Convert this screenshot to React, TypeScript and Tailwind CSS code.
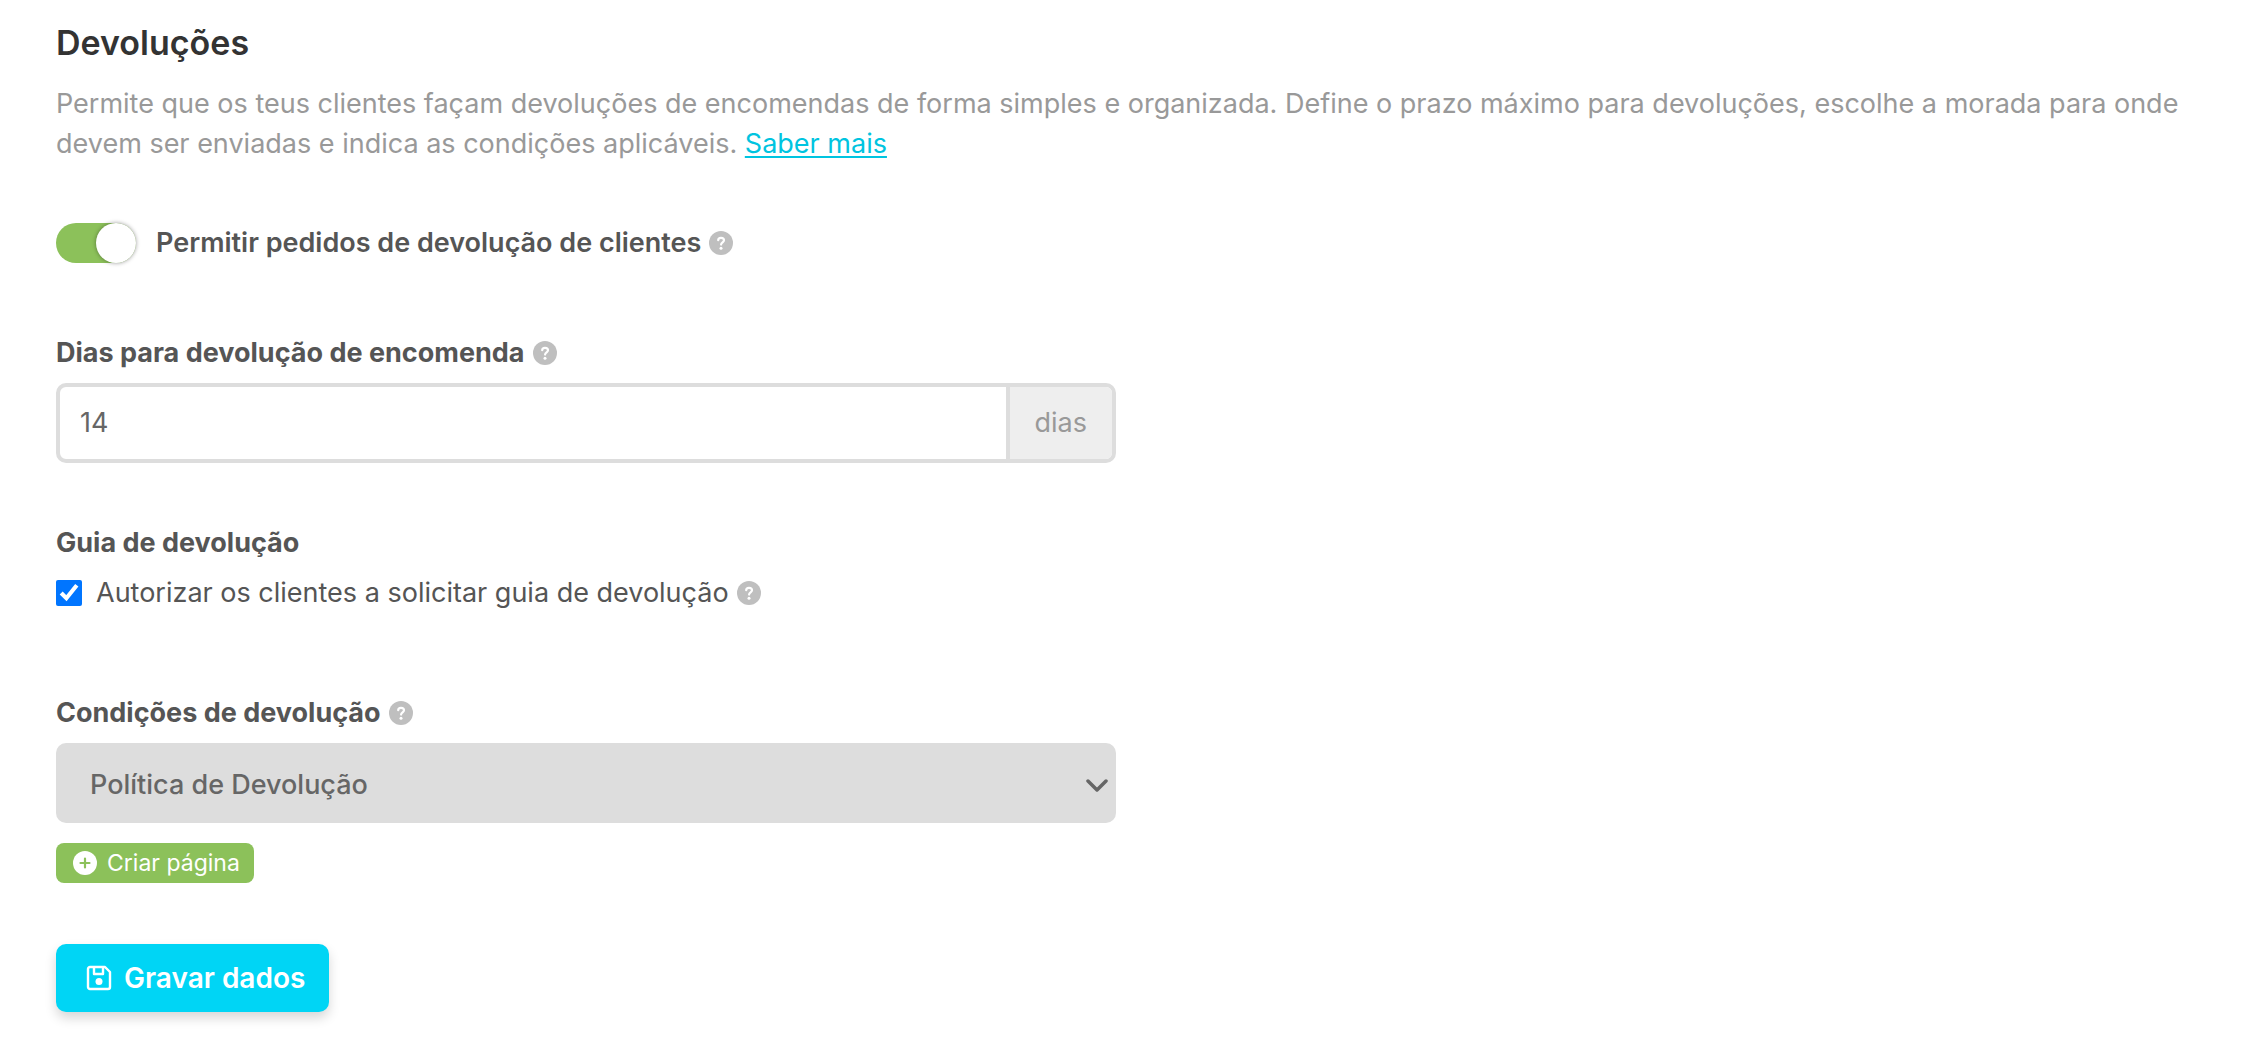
import React from "react";

function Help() {
  return (
    <button type="button" aria-label="Ajuda" className="inline-flex shrink-0">
      <svg viewBox="0 0 24 24" className="size-6" aria-hidden="true">
        <circle cx="12" cy="12" r="12" fill="#bfbfbf" />
        <path d="M9.200 9.200C9.200 7.600 10.500 6.800 12 6.800s3 .9 3 2.500c0 2-2.900 2.100-2.900 4.300" fill="none" stroke="#fff" strokeWidth="2.200" strokeLinecap="round" />
        <circle cx="12" cy="17.300" r="1.500" fill="#fff" />
      </svg>
    </button>
  );
}

export default function App() {
  return (
    <main className="min-h-screen bg-white px-14 pt-5 pb-10 font-['Inter',sans-serif] text-[27px] leading-10 text-[#555]">
      <h1 className="text-[34px] leading-[46px] font-semibold text-[#333]">Devoluções</h1>
      <p className="mt-[18px] text-[#999]">
        Permite que os teus clientes façam devoluções de encomendas de forma simples e organizada. Define o prazo máximo para devoluções, escolhe a morada para onde devem ser enviadas e indica as condições aplicáveis.{" "}
        <a href="#saber-mais" className="text-[#00c4e0] underline decoration-2 underline-offset-3">Saber mais</a>
      </p>

      <form className="w-[1060px] max-w-full">
        <div className="mt-[57px] flex h-11 items-center">
          <label className="flex items-center font-semibold">
            <input type="checkbox" role="switch" defaultChecked className="peer sr-only" />
            <span className="mr-5 flex h-10 w-20 items-center justify-end rounded-full bg-[#8cc15a]">
              <span className="size-10 shrink-0 rounded-full bg-white shadow-[0_0_4px_rgba(0,0,0,0.4)]" />
            </span>
            Permitir pedidos de devolução de clientes
          </label>
          <span className="ml-2 flex"><Help /></span>
        </div>

        <div className="mt-[68px] flex items-center gap-2">
          <label htmlFor="dias" className="font-bold">Dias para devolução de encomenda</label>
          <Help />
        </div>
        <div className="mt-2.5 flex h-20 overflow-hidden rounded-[10px] border-4 border-[#ddd]">
          <input id="dias" type="text" defaultValue="14" className="min-w-0 flex-1 px-5 text-[#666] outline-none" />
          <span className="flex items-center border-l-4 border-[#ddd] bg-[#eee] px-[25px] text-[#999]">dias</span>
        </div>

        <fieldset className="mt-[60px]">
          <legend className="font-bold">Guia de devolução</legend>
          <div className="mt-2.5 flex items-center">
            <label className="flex items-center gap-3.5">
              <input type="checkbox" defaultChecked className="size-[26px] accent-[#0075ff]" />
              Autorizar os clientes a solicitar guia de devolução
            </label>
            <span className="ml-2 flex"><Help /></span>
          </div>
        </fieldset>

        <div className="mt-20 flex items-center gap-2">
          <label htmlFor="condicoes" className="font-bold">Condições de devolução</label>
          <Help />
        </div>
        <div className="relative mt-2.5">
          <select id="condicoes" className="h-20 w-full appearance-none rounded-[10px] bg-[#ddd] px-[34px] pt-1 font-medium text-[#666]">
            <option>Política de Devolução</option>
          </select>
          <svg viewBox="0 0 22 14" className="pointer-events-none absolute top-9 right-2 h-3.5 w-[22px]" aria-hidden="true">
            <path d="M2 2l9 9 9-9" fill="none" stroke="#666" strokeWidth="3.500" strokeLinecap="round" strokeLinejoin="round" />
          </svg>
        </div>
        <button type="button" className="mt-5 flex h-10 items-center gap-2.5 rounded-lg bg-[#8cc15a] pr-3.5 pl-[17px] text-[23px] text-white">
          <svg viewBox="0 0 24 24" className="size-6" aria-hidden="true">
            <circle cx="12" cy="12" r="12" fill="#fff" />
            <path d="M12 7.500v9M7.500 12h9" stroke="#8cc15a" strokeWidth="2.200" strokeLinecap="round" />
          </svg>
          Criar página
        </button>
        <button type="submit" className="mt-[61px] flex h-[68px] items-center gap-3 rounded-[10px] bg-[#00d5f5] pr-6 pl-[30px] text-[28px] font-semibold text-white shadow-[0_6px_12px_rgba(0,0,0,0.16)]">
          <svg viewBox="0 0 26 26" className="size-[26px]" aria-hidden="true" fill="none" stroke="#fff" strokeWidth="2.400" strokeLinejoin="round">
            <path d="M4 2h15l5 5v15a2 2 0 0 1-2 2H4a2 2 0 0 1-2-2V4a2 2 0 0 1 2-2z" />
            <path d="M8 2v7h9V2" />
            <circle cx="13" cy="16.500" r="3.500" fill="#fff" stroke="none" />
          </svg>
          Gravar dados
        </button>
      </form>
    </main>
  );
}
